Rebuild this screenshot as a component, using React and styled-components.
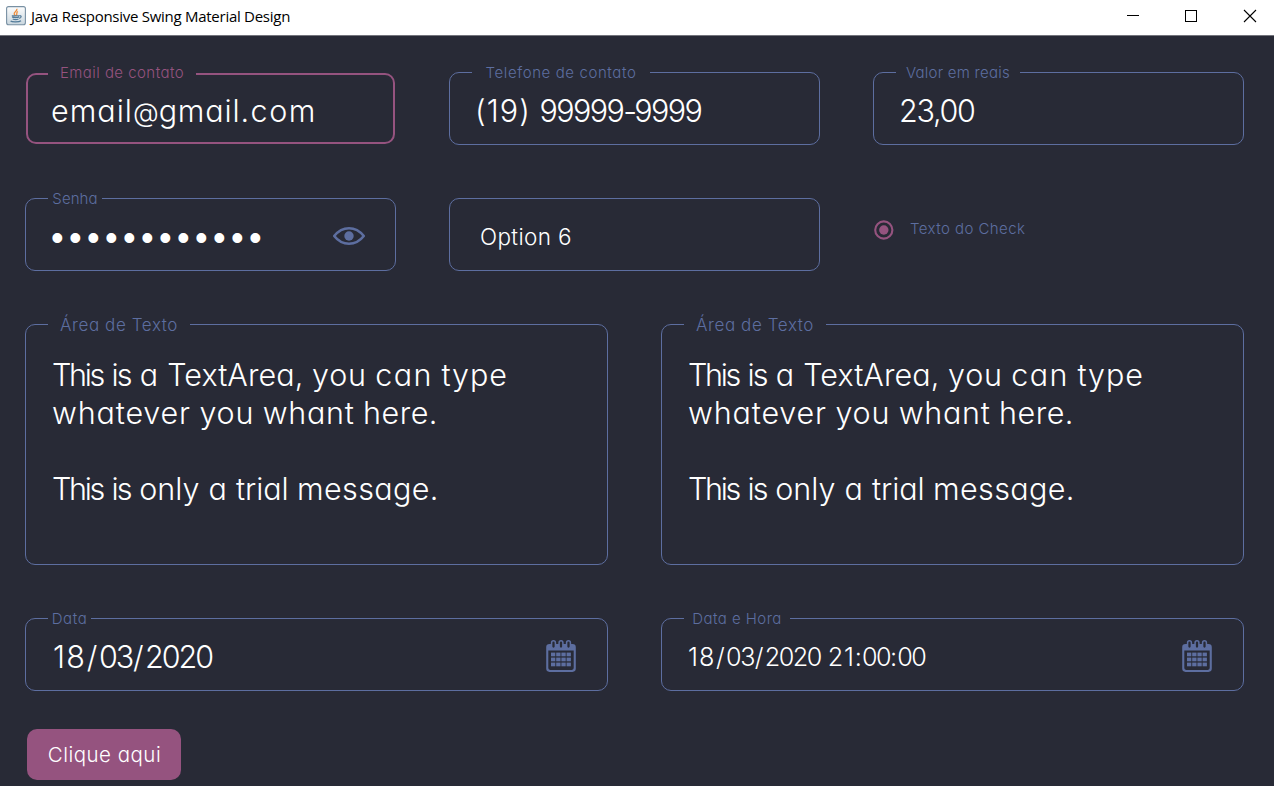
import React from 'react';
import styled, { createGlobalStyle, css } from 'styled-components';

const color = {
  background: '#282a36',
  line: '#5d6ea0',
  accent: '#95537f',
  text: '#ffffff',
};

const GlobalStyle = createGlobalStyle`
  * { box-sizing: border-box; }
  html, body { margin: 0; height: 100%; background: ${color.background}; overflow: hidden; }
  #root { height: 100%; }
`;

const Window = styled.div`
  display: flex;
  flex-direction: column;
  height: 100%;
  font-family: Inter, 'Open Sans', sans-serif;
  font-weight: 300;
  font-feature-settings: 'cv11' 1;
  color: ${color.text};
`;

const TitleBar = styled.header`
  display: flex;
  align-items: flex-start;
  height: 36px;
  flex: none;
  padding-left: 6px;
  background: #fff;
  border-bottom: 1px solid #73747c;
`;

const JavaIcon = styled.svg`
  width: 20px;
  height: 20px;
  margin-top: 6px;
`;

const Title = styled.span`
  flex: 1;
  margin-left: 5px;
  font: 400 15px/20px 'Open Sans', sans-serif;
  font-feature-settings: normal;
  letter-spacing: -0.27px;
  padding-top: 6px;
  color: #000;
`;

const WindowControls = styled.div`
  display: flex;
  gap: 45px;
  padding: 9px 17px 0 0;

  svg { width: 14px; height: 14px; display: block; }
`;

const Form = styled.main`
  display: flex;
  flex-direction: column;
  gap: 53px;
  padding: 36px 30px 6px 25px;
`;

const Row = styled.section`
  display: grid;
  grid-template-columns: repeat(${(p) => p.$columns}, 1fr);
  column-gap: 53px;
`;

const focusedBox = css`
  margin: 1px;
  border: 2px solid ${color.accent};
  height: 71px;
  padding: 17px 0 0 23px;
`;

const Box = styled.div`
  position: relative;
  display: flex;
  align-items: flex-start;
  height: ${(p) => (p.$tall ? 241 : 73)}px;
  padding: ${(p) => (p.$tall ? 31 : 19)}px 0 0 ${(p) => p.$indent || 26}px;
  border: 1px solid ${color.line};
  border-radius: 10px;
  ${(p) => p.$focused && focusedBox}
`;

const Label = styled.label`
  position: absolute;
  left: ${(p) => (p.$focused ? 20 : 22)}px;
  top: ${(p) => (p.$focused ? -13 : -11)}px;
  width: ${(p) => p.$gap}px;
  text-align: center;
  white-space: nowrap;
  font-size: ${(p) => p.$size || 15}px;
  line-height: 22px;
  letter-spacing: ${(p) => p.$tracking || 0}px;
  background: ${color.background};
  color: ${(p) => (p.$focused ? color.accent : color.line)};
`;

const Value = styled.span`
  flex: 1;
  white-space: pre;
  font-size: ${(p) => p.$size || 30.5}px;
  line-height: 38px;
  letter-spacing: ${(p) => p.$tracking || 0}px;
`;

const Run = styled.span`
  letter-spacing: ${(p) => p.$tracking}px;
  padding: 0 ${(p) => p.$side || 0}px;
`;

const AtSign = styled.span`
  font-size: 26.5px;
  vertical-align: 0.5px;
`;

const Bullets = styled.span`
  flex: 1;
  font: 36px/39px 'Liberation Sans', sans-serif;
  letter-spacing: 5.4px;
`;

const TextLines = styled.div`
  display: flex;
  flex-direction: column;
`;

const TextLine = styled(Value)`
  flex: none;
  height: 38px;
`;

const EyeIcon = styled.svg`
  width: 34px;
  height: 20px;
  margin: 8px 29px 0 0;
`;

const CalendarIcon = styled.svg`
  width: 30px;
  height: 33px;
  margin: 2px 31px 0 0;
`;

const RadioOption = styled.label`
  display: flex;
  align-items: center;
  gap: 15px;
  height: 22px;
  margin-top: 19px;
  font-size: 15px;
  letter-spacing: 0.44px;
  color: ${color.line};

  svg { width: 22px; height: 22px; margin-top: 4px; }
`;

const SubmitButton = styled.button`
  width: 154px;
  height: 51px;
  margin: -15px 0 0 2px;
  padding: 0 0 1px 1px;
  border: 0;
  border-radius: 10px;
  background: ${color.accent};
  color: ${color.text};
  font: inherit;
  font-size: 20.5px;
  font-feature-settings: inherit;
  letter-spacing: 0.48px;
`;

function Field({ label, gap, labelSize, labelTracking, focused, tall, indent, children }) {
  return (
    <Box $focused={focused} $tall={tall} $indent={indent}>
      {label && (
        <Label $gap={gap} $size={labelSize} $tracking={labelTracking} $focused={focused}>
          {label}
        </Label>
      )}
      {children}
    </Box>
  );
}

function Java() {
  return (
    <JavaIcon viewBox="0 0 20 20">
      <defs>
        <linearGradient id="tile" x1="0" y1="0" x2="0" y2="1">
          <stop offset="0" stopColor="#fdfdfd" />
          <stop offset="1" stopColor="#c9d6de" />
        </linearGradient>
      </defs>
      <rect x="0.6" y="0.6" width="18.8" height="18.2" rx="2" fill="url(#tile)" stroke="#7890a3" strokeWidth="1.1" />
      <path d="M10.8 2.8C12 5 7.6 5.9 8.2 8c.2.8 1 1.3 1.2 2M12 5.5C9.5 6.6 11.8 7.6 10.3 9.7" fill="none" stroke="#ee8e3c" strokeWidth="1.3" />
      <path d="M5.8 9.8h7.6M6.2 11c.8.8 5.6.8 7 0M6.7 13c1.5.7 4.3.7 5.8 0M13.6 9.7c2.2-.3 2 2.1-.4 2.6M4.6 15c1.4 1.3 8.6 1.2 10.4-.3" fill="none" stroke="#527b99" strokeWidth="1.2" />
    </JavaIcon>
  );
}

function Eye() {
  return (
    <EyeIcon viewBox="0 0 34 20">
      <path d="M2.2 10C6.5 4.6 11 2.2 17 2.2s10.5 2.4 14.8 7.8c-4.3 5.4-8.8 7.8-14.8 7.8S6.5 15.4 2.2 10Z" fill="none" stroke={color.line} strokeWidth="2.6" strokeLinejoin="round" />
      <circle cx="17" cy="10" r="4.7" fill={color.line} />
    </EyeIcon>
  );
}

const cellColumns = [5, 10.2, 15.4, 20.6];
const cellRows = [12.6, 17.6, 22.6];
const ringCenters = [7.5, 15, 22.5];

function Calendar() {
  return (
    <CalendarIcon viewBox="0 0 30 33">
      <path d="M3.5 4h23A3.3 3.3 0 0 1 29.8 7.3v21.3a3.3 3.3 0 0 1-3.3 3.3h-23A3.3 3.3 0 0 1 .2 28.6V7.3A3.3 3.3 0 0 1 3.5 4ZM2.3 10.4v17.7a1.8 1.8 0 0 0 1.8 1.8h21.8a1.8 1.8 0 0 0 1.8-1.8V10.4Z" fill={color.line} fillRule="evenodd" />
      {ringCenters.map((x) => (
        <rect key={x} x={x - 1.9} y="0.8" width="3.8" height="7.6" rx="1.9" fill={color.background} stroke={color.line} strokeWidth="1.5" />
      ))}
      {cellRows.map((y) =>
        cellColumns.map((x) => <rect key={`${x}-${y}`} x={x} y={y} width="4.3" height="3.7" fill={color.line} />)
      )}
    </CalendarIcon>
  );
}

function TextArea() {
  return (
    <Field label="Área de Texto" gap={142} labelSize={17} labelTracking={0.6} tall>
      <TextLines>
        <TextLine>
          <Run $tracking={-2.3}>This</Run> <Run $tracking={-1.9}>is</Run> <Run $side={0.5}>a</Run>{' '}
          <Run $tracking={0.1}>TextArea,</Run> <Run $tracking={0.75}>you</Run>{' '}
          <Run $tracking={1.4}>can</Run> <Run $tracking={0.9}>type</Run>
        </TextLine>
        <TextLine>
          <Run $tracking={0.85}>whatever</Run> <Run $tracking={0.75}>you</Run>{' '}
          <Run $tracking={0.7}>whant</Run> <Run $tracking={0.5}>here.</Run>
        </TextLine>
        <TextLine />
        <TextLine>
          <Run $tracking={-2.3}>This</Run> <Run $tracking={-1.9}>is</Run> <Run $tracking={0}>only</Run>{' '}
          <Run $side={0.5}>a</Run> <Run $tracking={-0.1}>trial</Run> <Run $tracking={0.35}>message.</Run>
        </TextLine>
      </TextLines>
    </Field>
  );
}

export default function App() {
  return (
    <Window>
      <GlobalStyle />
      <TitleBar>
        <Java />
        <Title>Java Responsive Swing Material Design</Title>
        <WindowControls>
          <svg viewBox="0 0 14 14"><path d="M2 6.5h12" stroke="#000" /></svg>
          <svg viewBox="0 0 14 14"><rect x="1.5" y="1.5" width="11" height="11" fill="none" stroke="#000" /></svg>
          <svg viewBox="0 0 14 14"><path d="M1 1l12 12M13 1L1 13" stroke="#000" strokeWidth="1.1" /></svg>
        </WindowControls>
      </TitleBar>
      <Form>
        <Row $columns={3}>
          <Field label="Email de contato" gap={148} labelTracking={0.45} focused>
            <Value>
              <Run $tracking={1}>email</Run><AtSign>@</AtSign><Run $tracking={0.85}>gmail</Run><Run $tracking={1.5}>.com</Run>
            </Value>
          </Field>
          <Field label="Telefone de contato" gap={178} labelTracking={0.6} indent={25}>
            <Value>
              <Run $tracking={1.1}>(19)</Run> <Run $tracking={-1.6}>99999</Run><Run $tracking={-3}>-</Run><Run $tracking={-1.6}>9999</Run>
            </Value>
          </Field>
          <Field label="Valor em reais" gap={124} labelTracking={0.25} indent={25}>
            <Value $tracking={-1.3}>23,00</Value>
          </Field>
        </Row>
        <Row $columns={3}>
          <Field label="Senha" gap={54} labelTracking={0.1} indent={25}>
            <Bullets>••••••••••••</Bullets>
            <Eye />
          </Field>
          <Field indent={30}>
            <Value $size={22.5} $tracking={0.35}>Option 6</Value>
          </Field>
          <RadioOption>
            <svg viewBox="0 0 22 22">
              <circle cx="10.8" cy="11" r="8.6" fill="none" stroke={color.accent} strokeWidth="2.1" />
              <circle cx="10.8" cy="11" r="4.7" fill={color.accent} />
            </svg>
            Texto do Check
          </RadioOption>
        </Row>
        <Row $columns={2}>
          <TextArea />
          <TextArea />
        </Row>
        <Row $columns={2}>
          <Field label="Data" gap={43} labelTracking={0.6} indent={27}>
            <Value>
              <Run $tracking={1.3}>18</Run><Run $tracking={1} $side={0.5}>/</Run><Run $tracking={-1.9}>03</Run><Run $tracking={1} $side={0.5}>/</Run><Run $tracking={-2}>2020</Run>
            </Value>
            <Calendar />
          </Field>
          <Field label="Data e Hora" gap={106} labelTracking={0.45} indent={26}>
            <Value $size={25.2}>
              <Run $tracking={1.1}>18</Run><Run $tracking={0.8} $side={0.5}>/</Run><Run $tracking={-1.4}>03</Run><Run $tracking={0.8} $side={0.5}>/</Run><Run $tracking={-1.5}>2020</Run>{' '}
              <Run $tracking={0.8}>21</Run>:<Run $tracking={-1.5}>00</Run>:<Run $tracking={-1.5}>00</Run>
            </Value>
            <Calendar />
          </Field>
        </Row>
        <SubmitButton>Clique aqui</SubmitButton>
      </Form>
    </Window>
  );
}
